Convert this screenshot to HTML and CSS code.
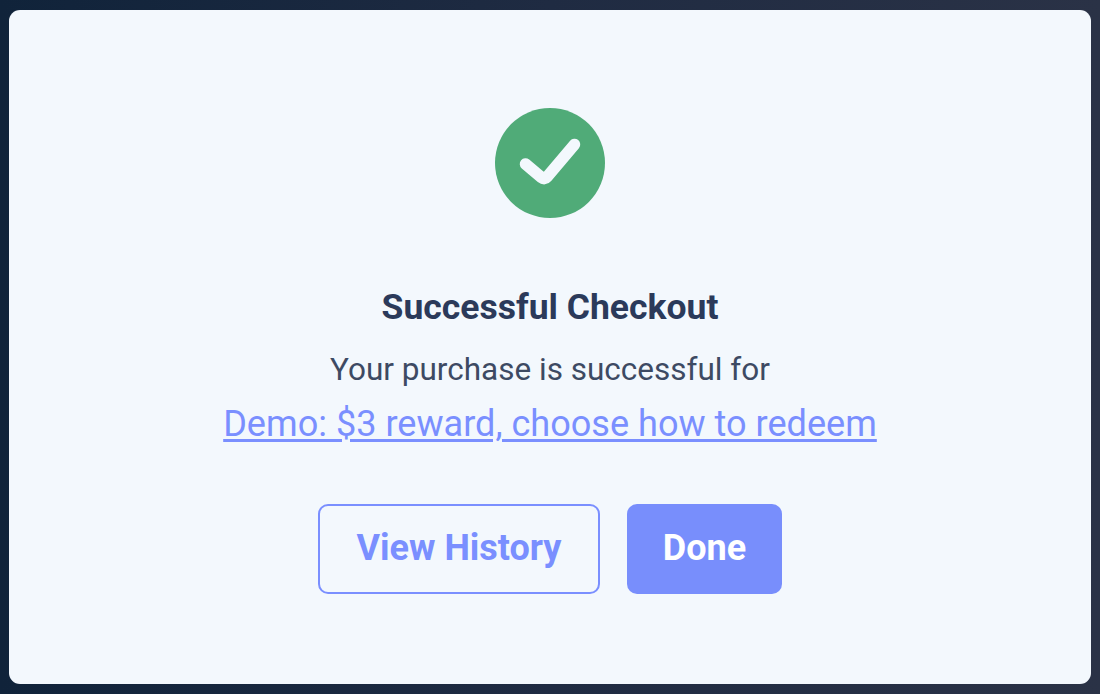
FILE: index.html
```html
<!DOCTYPE html>
<html>
    <head>
        <title>Successful Checkout</title>
        <link rel="stylesheet" href="styles.css">
    </head>

    <body>
        <section class="modal">
            <svg class="successIcon" viewBox="0 0 110 110" width="110" height="110">
                <circle cx="55" cy="55" r="55" fill="#50ab78"/>
                <path d="M30.5 56 L46.5 69.5 Q49.5 72 52 69 L79.5 36.5" fill="none" stroke="#f3f8fd" stroke-width="11.5" stroke-linecap="round" stroke-linejoin="round"/>
            </svg>
            <h1 class="title">Successful Checkout</h1>
            <p class="message">Your purchase is successful for</p>
            <a class="rewardLink" href="#">Demo: $3 reward, choose how to redeem</a>
            <div class="actions">
                <button class="btn btnOutline">View History</button>
                <button class="btn btnFilled">Done</button>
            </div>
        </section>
    </body>
</html>
```

FILE: styles.css
```css
body {
    margin: 0;
    height: 694px;
    box-sizing: border-box;
    padding: 10px 9px;
    overflow: hidden;
    font-family: Roboto, "Liberation Sans", sans-serif;
    background: linear-gradient(90deg, #10233a 0%, #1f2b42 50%, #2a3246 100%);
}

.modal {
    height: 674px;
    box-sizing: border-box;
    padding-top: 98px;
    display: flex;
    flex-direction: column;
    align-items: center;
    background-color: #f3f8fd;
    border-radius: 11px;
}

.successIcon {
    display: block;
}

.title {
    margin: 69px 0 0 0;
    font-size: 35.5px;
    line-height: 40px;
    font-weight: 700;
    color: #2b3a5a;
}

.message {
    margin: 23px 0 0 0;
    font-size: 31.5px;
    line-height: 40px;
    color: #3d4a63;
}

.rewardLink {
    margin-top: 13px;
    font-size: 36.1px;
    line-height: 42px;
    color: #7a8fff;
    text-decoration-thickness: 3px;
    text-underline-offset: 3px;
}

.actions {
    display: flex;
    gap: 27px;
    margin-top: 59px;
}

.btn {
    height: 90px;
    box-sizing: border-box;
    padding: 0 0 2px 0;
    border-radius: 10px;
    font-family: inherit;
    font-size: 36px;
    font-weight: 700;
    cursor: pointer;
}

.btnOutline {
    width: 282px;
    color: #7a8fff;
    background-color: transparent;
    border: 2px solid #7a8fff;
}

.btnFilled {
    width: 155px;
    color: #fff;
    background-color: #788efc;
    border: none;
}
```
